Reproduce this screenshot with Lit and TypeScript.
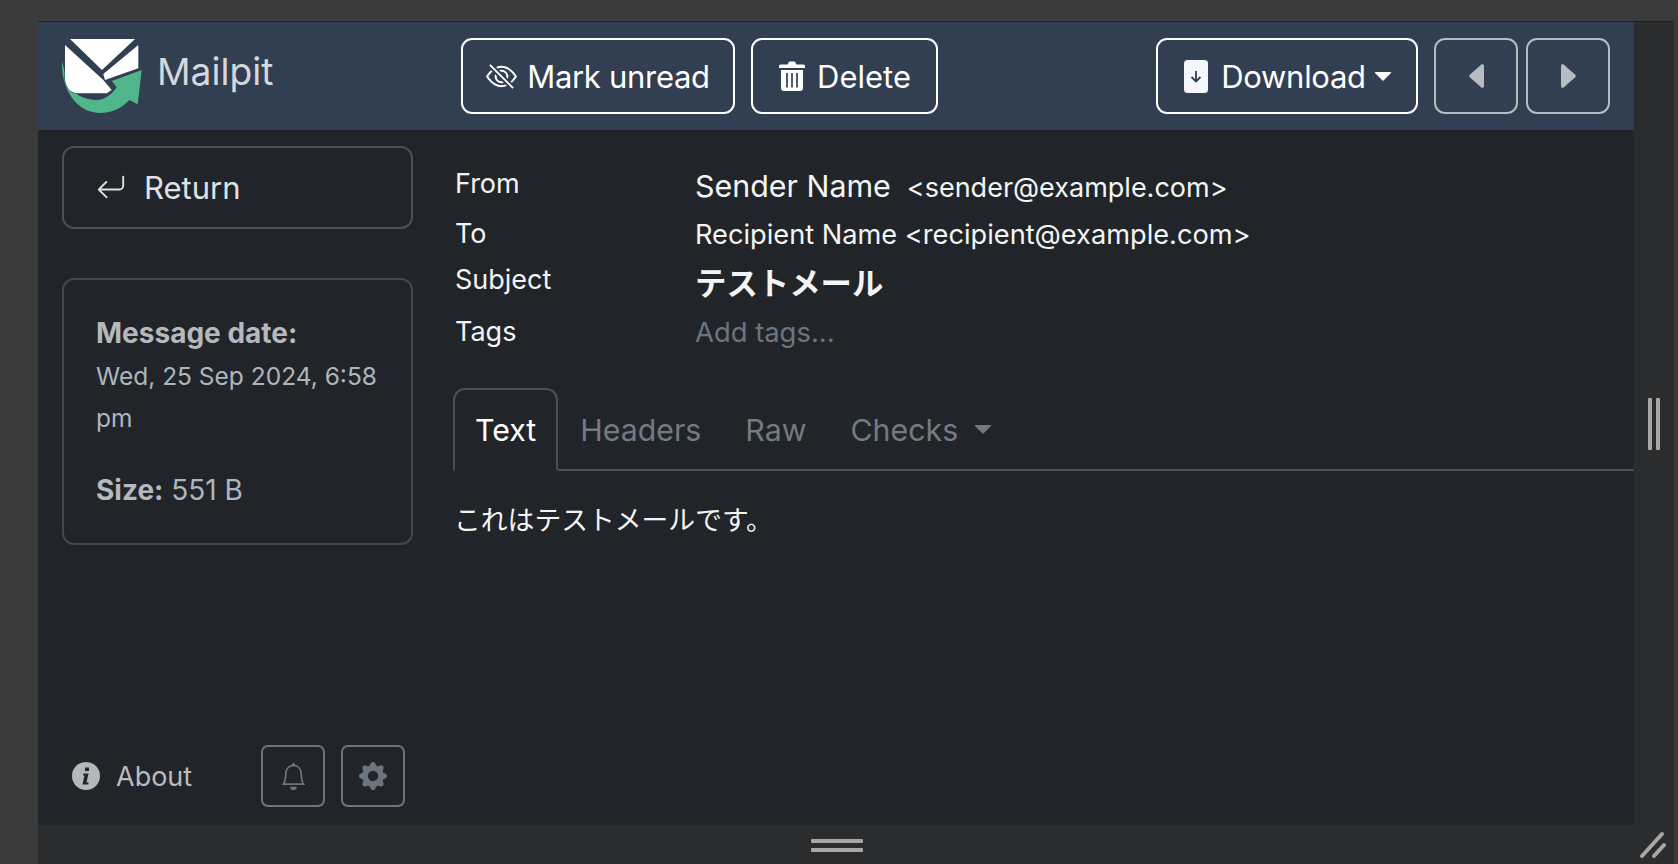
import { LitElement, html, css, svg } from "lit";
import { customElement } from "lit/decorators.js";

const bi = (d: string, size: number) => html`<svg class="ico" width=${size} height=${size} viewBox="0 0 16 16" fill="currentColor">${svg`<path d=${d}></path>`}</svg>`;
const EYE = "M13.359 11.238C15.06 9.72 16 8 16 8s-3-5.5-8-5.5a7.028 7.028 0 0 0-2.79.588l.77.771A5.944 5.944 0 0 1 8 3.5c2.12 0 3.879 1.168 5.168 2.457A13.134 13.134 0 0 1 14.828 8c-.058.087-.122.183-.195.288-.335.48-.83 1.12-1.465 1.755-.165.165-.337.328-.517.486l.708.709zM11.297 9.176a3.5 3.5 0 0 0-4.474-4.474l.823.823a2.5 2.5 0 0 1 2.829 2.829l.822.822zm-2.943 1.299.822.822a3.5 3.5 0 0 1-4.474-4.474l.823.823a2.5 2.5 0 0 0 2.829 2.829zM3.35 5.47c-.18.16-.353.322-.518.487A13.134 13.134 0 0 0 1.172 8l.195.288c.335.48.83 1.12 1.465 1.755C4.121 11.332 5.881 12.5 8 12.5c.716 0 1.39-.133 2.02-.36l.77.772A7.029 7.029 0 0 1 8 13.5C3 13.5 0 8 0 8s.939-1.721 2.641-3.238l.708.709zm10.296 8.884-12-12 .708-.708 12 12-.708.708z";
const RET = "M14.5 1.5a.5.5 0 0 1 .5.5v4.8a2.5 2.5 0 0 1-2.5 2.5H2.707l3.347 3.346a.5.5 0 0 1-.708.708l-4.2-4.2a.5.5 0 0 1 0-.708l4-4a.5.5 0 1 1 .708.708L2.707 8.3H12.5A1.5 1.5 0 0 0 14 6.8V2a.5.5 0 0 1 .5-.5z";
const BELL = "M8 16a2 2 0 0 0 2-2H6a2 2 0 0 0 2 2zM8 1.918l-.797.161A4.002 4.002 0 0 0 4 6c0 .628-.134 2.197-.459 3.742-.16.767-.376 1.566-.663 2.258h10.244c-.287-.692-.502-1.49-.663-2.258C12.134 8.197 12 6.628 12 6a4.002 4.002 0 0 0-3.203-3.92L8 1.917zM14.22 12c.223.447.481.801.78 1H1c.299-.199.557-.553.78-1C2.68 10.2 3 6.88 3 6c0-2.42 1.72-4.44 4.005-4.901a1 1 0 1 1 1.99 0A5.002 5.002 0 0 1 13 6c0 .88.32 4.2 1.22 6z";
const GEAR = "M9.405 1.05c-.413-1.4-2.397-1.4-2.81 0l-.1.34a1.464 1.464 0 0 1-2.105.872l-.31-.17c-1.283-.698-2.686.705-1.987 1.987l.169.311c.446.82.023 1.841-.872 2.105l-.34.1c-1.4.413-1.4 2.397 0 2.81l.34.1a1.464 1.464 0 0 1 .872 2.105l-.17.31c-.698 1.283.705 2.686 1.987 1.987l.311-.169a1.464 1.464 0 0 1 2.105.872l.1.34c.413 1.4 2.397 1.4 2.81 0l.1-.34a1.464 1.464 0 0 1 2.105-.872l.31.17c1.283.698 2.686-.705 1.987-1.987l-.169-.311a1.464 1.464 0 0 1 .872-2.105l.34-.1c1.4-.413 1.4-2.397 0-2.81l-.34-.1a1.464 1.464 0 0 1-.872-2.105l.17-.31c.698-1.283-.705-2.686-1.987-1.987l-.311.169a1.464 1.464 0 0 1-2.105-.872l-.1-.34zM8 10.93a2.929 2.929 0 1 1 0-5.86 2.929 2.929 0 0 1 0 5.858z";

@customElement("app-root")
export class AppRoot extends LitElement {
  static styles = css`
    :host { display: block; width: 1678px; height: 864px; overflow: hidden; background: #3b3b3b;
      font-family: Inter, "Noto Sans CJK JP", sans-serif; color: #dee2e6; font-size: 27px; }
    * { box-sizing: border-box; }
    .ico { display: block; flex: none; }
    .frame { margin: 21px 4px 0 38px; height: 843px; background: #2b2c2d; border-top: 1px solid #1f2123;
      display: grid; grid-template-columns: 1596px 1fr; grid-template-rows: 803px 1fr; }
    .app { background: #212529; display: flex; flex-direction: column; min-width: 0; }
    nav { height: 108px; background: #323e51; display: flex; align-items: center; padding: 0 24px 0 24px; flex: none; }
    .brand { width: 399px; display: flex; align-items: center; gap: 15px; }
    .brand span { font-size: 37.2px; color: #d5d7db; line-height: 1; margin-top: -8px; }
    .btn { height: 76px; border: 2px solid #fff; border-radius: 11px; display: flex; align-items: center; justify-content: center; color: #fff; font-size: 31px; gap: 8px; background: none; }
    .mark { width: 274px; gap: 10px; letter-spacing: -.3px; }
    .del { width: 187px; gap: 12px; margin-left: 16px; padding-left: 1px; }
    .spacer { flex: 1; }
    .nv { width: 84px; opacity: .65; color: #fff; }
    .nv + .nv { margin-left: 8px; }
    .dl { width: 262px; margin-right: 16px; gap: 13px; letter-spacing: -.3px; padding-left: 2px; }
    .caret { width: 0; height: 0; border-left: 9.5px solid transparent; border-right: 9.5px solid transparent; border-top: 9.5px solid currentColor; margin-left: -5px; border-radius: 2px; }
    .body { flex: 1; display: flex; min-height: 0; }
    aside { width: 351px; margin-left: 24px; flex: none; display: flex; flex-direction: column; padding: 16px 0 18px; }
    .ret { height: 83px; border: 2px solid #495057; border-radius: 12px; display: flex; align-items: center; padding-left: 32px; gap: 18px; font-size: 31px; color: #dee2e6; }
    .card { margin-top: 49px; height: 267px; border: 2px solid #44484e; border-radius: 12px; padding: 32px 24px 0 32px; color: #adb5bd; font-size: 24.5px; line-height: 42px; }
    .card b { color: #b5b8bd; font-weight: 700; font-size: 28px; }
    .card p { margin: 0 0 30px; }
    .card .sz { font-size: 28px; }
    .foot { margin-top: auto; display: flex; align-items: center; }
    .about { display: flex; align-items: center; gap: 16px; font-size: 27px; color: #b9bbbf; padding-left: 10px; width: 199px; }
    .sq { width: 64px; height: 62px; border: 2px solid #6c757d; border-radius: 7px; display: flex; align-items: center; justify-content: center; color: #6c757d; }
    .sq + .sq { margin-left: 16px; }
    main { flex: 1; min-width: 0; padding: 33px 0 0 41px; display: flex; flex-direction: column; }
    .meta { display: grid; grid-template-columns: 240px 1fr; grid-template-rows: 50px 46px 52px 48px; font-size: 27px; color: #f3f4f5; padding-left: 1px; }
    .lb { line-height: 42px; }
    .val { line-height: 44px; }
    .from { line-height: 46px; }
    .to { font-size: 27.2px; }
    .name { font-size: 30.4px; margin-right: 16px; }
    .subj { font-size: 31.4px; font-weight: 700; line-height: 50px; }
    .ph { color: #6c757d; font-size: 27.4px; line-height: 43px; }
    .tabs { margin-top: 29px; display: flex; height: 83px; border-bottom: 2px solid #495057; flex: none; margin-left: -1px; }
    .tab { font-size: 30.3px; color: #727a83; padding: 0 22px; display: flex; align-items: center; gap: 16px; height: 83px; }
    .tab.on { color: #fff; border: 2px solid #495057; border-bottom: 2px solid #212529; border-radius: 12px 12px 0 0; padding: 0 20px; }
    .tab .caret { margin: 0; }
    .text { padding: 30px 0 0; font-size: 26.8px; color: #f3f4f5; line-height: 38px; }
    .gv { display: flex; justify-content: center; align-items: center; gap: 4px; }
    .bar { background: #a7a7a7; border-radius: 1px; }
    .gv .bar { width: 4px; height: 52px; }
    .gh { display: flex; flex-direction: column; align-items: center; gap: 5px; padding: 14px 0 0 2px; }
    .gh .bar { width: 52px; height: 4px; }
  `;

  render() {
    return html`<div class="frame">
      <div class="app">
        <nav>
          <div class="brand">
            <svg width="80" height="74" viewBox="0 0 80 74">
              <path fill="#4fb58a" d="M0 22 C-1 52 16 74 38 74 C50 74 60 69 67.300 61 L75.700 65.300 L79.700 31 L49.700 42 L54.700 48.300 C50 55 44 60 36 61 C22 61 8 55 4 38 Z"/>
              <path fill="#fff" stroke="#323e51" stroke-width="1" paint-order="stroke" d="M3 6 L41.300 41 L49.700 51 L44.700 54.300 H14.700 C8 54 3 47 3 39.300 Z"/>
              <path fill="#fff" d="M8 0 H73 L40 31 Z"/>
              <path fill="#fff" d="M76.300 6 V29.300 L43 41 L41.300 35 Z"/>
            </svg>
            <span>Mailpit</span>
          </div>
          <div class="btn mark">${bi(EYE, 31)}Mark unread</div>
          <div class="btn del">
            <svg class="ico" width="26" height="30" viewBox="0 0 26 30"><path fill="#fff" d="M1.500 3.500H8.500L9.500 1.500Q10 .5 11 .5H15Q16 .5 16.500 1.500L17.500 3.500H24.500Q26 3.500 26 5V7H0V5Q0 3.500 1.500 3.500ZM2 9H24V27Q24 30 21 30H5Q2 30 2 27Z"/><path stroke="#323e51" stroke-width="1.700" d="M8 12V26.500M13 12V26.500M18 12V26.500"/></svg>
            Delete
          </div>
          <div class="spacer"></div>
          <div class="btn dl">
            <svg class="ico" width="24" height="33" viewBox="0 0 24 33"><rect width="24" height="33" rx="3.500" fill="#f4f6f9"/><path fill="none" stroke="#323e51" stroke-width="1.800" d="M12 11V21M7.500 17L12 21.500L16.500 17"/></svg>
            Download<span class="caret"></span>
          </div>
          <div class="btn nv"><svg width="15" height="24" viewBox="0 0 15 24"><path fill="currentColor" d="M13 0Q15 0 15 2V22Q15 24 13 24L1 13.500Q-.5 12 1 10.500Z"/></svg></div>
          <div class="btn nv"><svg width="15" height="24" viewBox="0 0 15 24"><path fill="currentColor" d="M2 0Q0 0 0 2V22Q0 24 2 24L14 13.500Q15.500 12 14 10.500Z"/></svg></div>
        </nav>
        <div class="body">
          <aside>
            <div class="ret">${bi(RET, 30)}Return</div>
            <div class="card">
              <p><b>Message date:</b><br>Wed, 25 Sep 2024, 6:58 pm</p>
              <div class="sz"><b>Size:</b> 551 B</div>
            </div>
            <div class="foot">
              <div class="about">
                <svg class="ico" width="28" height="28" viewBox="0 0 28 28"><circle cx="14" cy="14" r="14" fill="#b5b7bb"/><path fill="#212529" d="M13 5.500h4v3.500h-4zM11.500 11.500h5l-2 9h2v2h-6l2-9h-1.500z"/></svg>
                About
              </div>
              <div class="sq">${bi(BELL, 27)}</div>
              <div class="sq">${bi(GEAR, 28)}</div>
            </div>
          </aside>
          <main>
            <div class="meta">
              <div class="lb">From</div>
              <div class="val from"><span class="name">Sender Name</span>&lt;sender@example.com&gt;</div>
              <div class="lb">To</div>
              <div class="val to">Recipient Name &lt;recipient@example.com&gt;</div>
              <div class="lb">Subject</div>
              <div class="val subj">テストメール</div>
              <div class="lb">Tags</div>
              <div class="val ph">Add tags...</div>
            </div>
            <div class="tabs">
              <div class="tab on">Text</div>
              <div class="tab">Headers</div>
              <div class="tab">Raw</div>
              <div class="tab">Checks<span class="caret"></span></div>
            </div>
            <div class="text">これはテストメールです。</div>
          </main>
        </div>
      </div>
      <div class="gv"><span class="bar"></span><span class="bar"></span></div>
      <div class="gh"><span class="bar"></span><span class="bar"></span></div>
      <div class="corner">
        <svg width="40" height="39" viewBox="0 0 40 39"><path d="M8 31 L28 9 M20 31 L30 20" stroke="#a7a7a7" stroke-width="4" stroke-linecap="round" fill="none"/></svg>
      </div>
    </div>`;
  }
}
